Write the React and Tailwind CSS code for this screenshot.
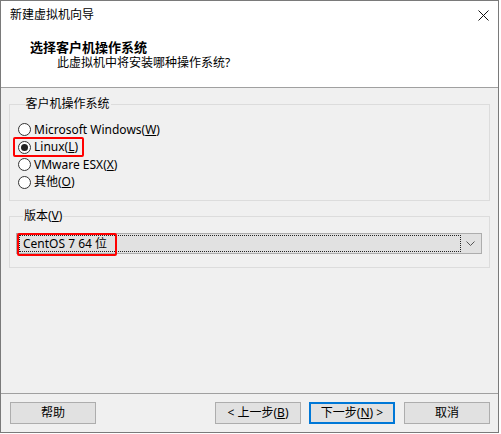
import React from 'react';

const Radio = ({ checked, children, highlight }) => (
  <div className="relative flex items-center h-[17.5px] gap-[3.5px]">
    <span className="w-[13px] h-[13px] rounded-full border border-[#333] bg-white flex items-center justify-center">
      {checked && <span className="w-[7px] h-[7px] rounded-full bg-[#222]" />}
    </span>
    <span>{children}</span>
    {highlight && (
      <span className="absolute left-[-4.5px] top-[-2px] w-[71px] h-[20px] border-2 border-[#ff0000] rounded-[2px]" />
    )}
  </div>
);

const Btn = ({ children, primary, className = '' }) => (
  <button
    className={`h-[22px] w-[86px] flex items-center justify-center bg-[#e1e1e1] ${
      primary ? 'border-2 border-[#0078d7]' : 'border border-[#adadad]'
    } ${className}`}
  >
    {children}
  </button>
);

export default function App() {
  return (
    <div
      className="w-[501px] h-[434px] bg-white text-[12px] text-black"
      style={{ fontFamily: '"Noto Sans", "Noto Sans CJK SC", sans-serif' }}
    >
      <div className="w-[499px] h-[433px] border border-[#7a7a7a] bg-[#f0f0f0] flex flex-col">
        {/* header */}
        <div className="h-[87px] bg-white border-b border-[#a0a0a0] flex flex-col">
          <div className="h-[28px] flex items-center justify-between pl-[9px] pr-[9px]">
            <span className="leading-[16px]">新建虚拟机向导</span>
            <svg width="11" height="11" viewBox="0 0 11 11" className="mr-[0px]">
              <path d="M0.5 0.5 L10.5 10.5 M10.5 0.5 L0.5 10.5" stroke="#111" strokeWidth="1" />
            </svg>
          </div>
          <div className="pt-[10px] pl-[29px] text-[13px] font-bold leading-[16px]">选择客户机操作系统</div>
          <div className="pl-[56px] leading-[16px]">此虚拟机中将安装哪种操作系统?</div>
        </div>

        {/* guest OS group */}
        <fieldset className="mt-[8px] mx-[8px] border border-[#dcdcdc] pl-[7.5px] pt-[9px] pb-[9px]">
          <legend className="ml-[7px] px-[1px] leading-[16px]">客户机操作系统</legend>
          <Radio>
            Microsoft Windows(<u>W</u>)
          </Radio>
          <Radio checked highlight>
            Linux(<u>L</u>)
          </Radio>
          <Radio>
            VMware ESX(<u>X</u>)
          </Radio>
          <Radio>
            其他(<u>O</u>)
          </Radio>
        </fieldset>

        {/* version group */}
        <fieldset className="mt-[7px] mx-[8px] border border-[#dcdcdc] pl-[6px] pr-[7px] pt-[9px] pb-[13px]">
          <legend className="ml-[7px] px-[1px] leading-[16px]">
            版本(<u>V</u>)
          </legend>
          <div className="relative h-[21px] bg-[#e1e1e1] border border-[#adadad] flex items-center">
            <div className="ml-[2px] h-[17px] w-[442px] border border-dotted border-[#222] flex items-center pl-[3px]">
              CentOS 7 64 位
            </div>
            <svg width="9" height="5" viewBox="0 0 9 5" className="ml-auto mr-[6px]">
              <path d="M0.5 0.5 L4.5 4.5 L8.5 0.5" stroke="#555" fill="none" strokeWidth="1" />
            </svg>
            <span className="absolute left-[0px] top-[-1px] w-[100px] h-[23px] border-2 border-[#ff0000] rounded-[2px]" />
          </div>
        </fieldset>

        {/* footer */}
        <div className="mt-auto border-t border-[#a0a0a0] pt-[8px] pb-[8px] pl-[9px] pr-[8px] flex items-center">
          <Btn>帮助</Btn>
          <Btn className="ml-auto w-[76px]">
            &lt; 上一步(<u>B</u>)
          </Btn>
          <Btn primary className="ml-[8px] w-[85px]">
            下一步(<u>N</u>) &gt;
          </Btn>
          <Btn className="ml-[9px] w-[86px]">取消</Btn>
        </div>
      </div>
    </div>
  );
}
